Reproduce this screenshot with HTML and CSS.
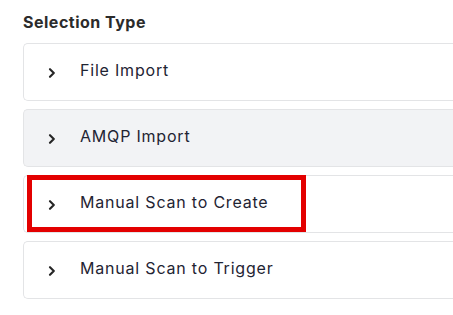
FILE: index.html
```html
<!DOCTYPE html>
<html lang="en">
<head>
    <meta charset="UTF-8">
    <meta name="viewport" content="width=device-width, initial-scale=1.0">
    <title>Selection Type</title>
    <link rel="stylesheet" href="styles.css">
</head>
<body>
    <div class="container">
        <h2 class="section-title">Selection Type</h2>

        <div class="type-list">
            <div class="type-item">
                <span class="chevron">
                    <svg width="10" height="10" viewBox="0 0 10 10"><path d="M3 1.2 L6.8 5 L3 8.8" fill="none" stroke="#262626" stroke-width="2.1" stroke-linecap="round" stroke-linejoin="round"/></svg>
                </span>
                <span class="type-label">File Import</span>
            </div>
            <div class="type-item type-item--hover">
                <span class="chevron">
                    <svg width="10" height="10" viewBox="0 0 10 10"><path d="M3 1.2 L6.8 5 L3 8.8" fill="none" stroke="#262626" stroke-width="2.1" stroke-linecap="round" stroke-linejoin="round"/></svg>
                </span>
                <span class="type-label">AMQP Import</span>
            </div>
            <div class="type-item">
                <span class="chevron">
                    <svg width="10" height="10" viewBox="0 0 10 10"><path d="M3 1.2 L6.8 5 L3 8.8" fill="none" stroke="#262626" stroke-width="2.1" stroke-linecap="round" stroke-linejoin="round"/></svg>
                </span>
                <span class="type-label">Manual Scan to Create</span>
                <!-- annotation box -->
                <div class="highlight"></div>
            </div>
            <div class="type-item">
                <span class="chevron">
                    <svg width="10" height="10" viewBox="0 0 10 10"><path d="M3 1.2 L6.8 5 L3 8.8" fill="none" stroke="#262626" stroke-width="2.1" stroke-linecap="round" stroke-linejoin="round"/></svg>
                </span>
                <span class="type-label">Manual Scan to Trigger</span>
            </div>
        </div>
    </div>
</body>
</html>
```

FILE: styles.css
```css
html, body {
    margin: 0;
    padding: 0;
    background: #ffffff;
}
body {
    font-family: Inter, "Liberation Sans", sans-serif;
}
.container {
    padding: 12px 0 0 23px;
}
.section-title {
    margin: 0 0 11px;
    font-size: 16px;
    font-weight: 700;
    line-height: 20px;
    letter-spacing: 0.5px;
    color: #2b2b2b;
}
.type-list {
    display: flex;
    flex-direction: column;
    gap: 8px;
}
.type-item {
    position: relative;
    display: flex;
    align-items: center;
    height: 56px;
    border: 1px solid #e3e4e6;
    border-right: none;
    border-radius: 5px 0 0 5px;
    background: #ffffff;
}
.type-item--hover {
    background: #f2f3f5;
}
.chevron {
    display: flex;
    width: 10px;
    height: 10px;
    margin: 1px 0 0 23px;
}
.type-label {
    margin: 0 0 4px 23px;
    font-size: 16px;
    color: #1f2433;
    letter-spacing: 0.8px;
}
.highlight {
    position: absolute;
    left: 3px;
    top: -1px;
    width: 269px;
    height: 47px;
    border: 5px solid #e30000;
}
```
